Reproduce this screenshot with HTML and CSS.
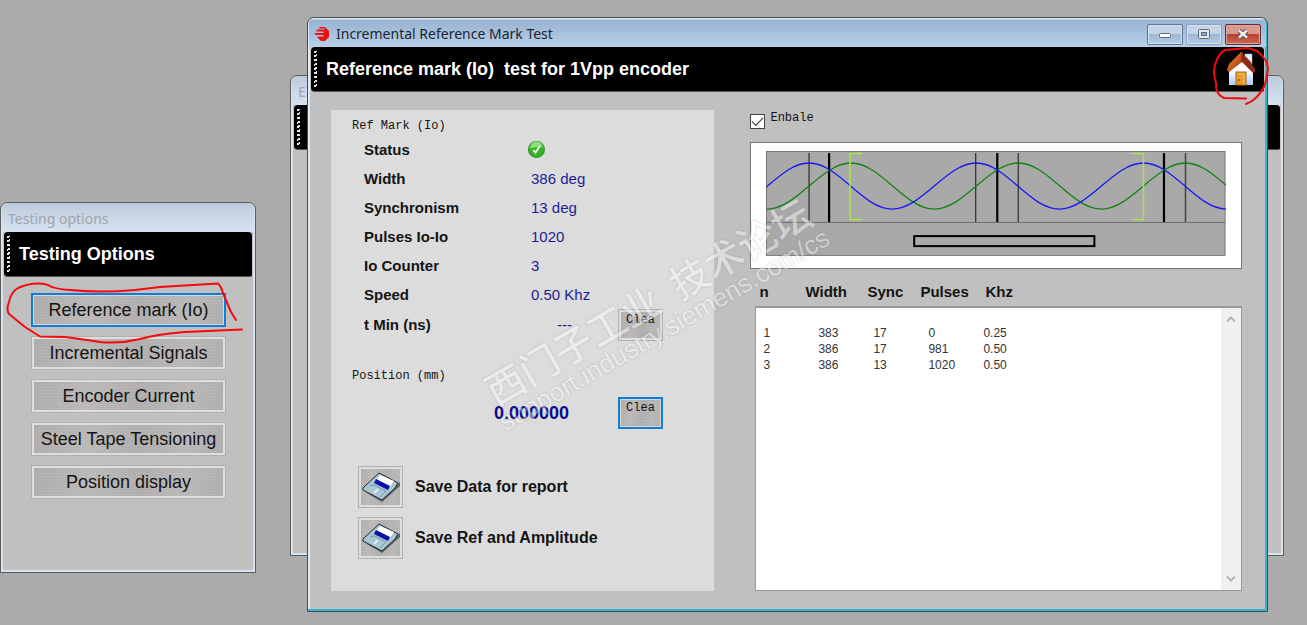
FILE: index.html
```html
<!DOCTYPE html>
<html lang="en">
<head>
<meta charset="utf-8">
<title>Incremental Reference Mark Test</title>
<link rel="stylesheet" href="styles.css">
</head>
<body>
<div class="desktop">

  <section class="window window-back">
    <div class="titlebar titlebar-idle">E</div>
    <div class="banner"><span class="grip"></span></div>
  </section>

  <section class="window window-options">
    <div class="titlebar titlebar-idle">Testing options</div>
    <div class="banner"><span class="grip"></span><h2 class="banner-title">Testing Options</h2></div>
    <nav class="options">
      <button class="metal option focused" type="button">Reference mark (Io)</button>
      <button class="metal option" type="button">Incremental Signals</button>
      <button class="metal option" type="button">Encoder Current</button>
      <button class="metal option" type="button">Steel Tape Tensioning</button>
      <button class="metal option" type="button">Position display</button>
    </nav>
  </section>

  <section class="window window-main">
    <div class="titlebar">
      <svg class="app-icon" viewBox="0 0 14 14"><path d="M5 0h5l4 4v6l-4 4H6l-3.500-3.500V9.500H8.500V8H0V6H8.500V4.500H1L2 2.500H10V1.500H3.500z" fill="#f20d12"/></svg>
      <span class="title-text">Incremental Reference Mark Test</span>
      <div class="controls">
        <button class="control" type="button" aria-label="Minimize"><svg viewBox="0 0 14 12"><rect x="1.500" y="5.500" width="11" height="4" rx="1" fill="#fff" stroke="#606a78"/></svg></button>
        <button class="control control-dim" type="button" aria-label="Maximize"><svg viewBox="0 0 14 12"><rect x="1.500" y="1.500" width="11" height="9" rx="1" fill="#e4e8ee" stroke="#606a78"/><rect x="4.500" y="4.500" width="5" height="3" fill="#8fa9c6" stroke="#606a78"/></svg></button>
        <button class="control control-close" type="button" aria-label="Close"><svg viewBox="0 0 14 12"><path d="M3 2.500l8 7M11 2.500l-8 7" stroke="#5a4a50" stroke-width="4.500"/><path d="M3 2.500l8 7M11 2.500l-8 7" stroke="#f4f0f0" stroke-width="2.500"/></svg></button>
      </div>
    </div>
    <div class="banner">
      <span class="grip"></span>
      <h1 class="banner-title">Reference mark (Io)&nbsp; test for 1Vpp encoder</h1>
      <button class="home" type="button" aria-label="Home">
        <svg viewBox="0 0 28 34">
          <defs>
            <linearGradient id="wall" x2="0" y2="1"><stop offset="0.400" stop-color="#fff"/><stop offset="1" stop-color="#a9cdfb"/></linearGradient>
            <linearGradient id="roof" x2="1" y2="1"><stop offset="0" stop-color="#ef8a35"/><stop offset="1" stop-color="#a32c0c"/></linearGradient>
          </defs>
          <path d="M18 2h7v10l-7-5z" fill="#e9f0fb" stroke="#a8b8d0" stroke-width=".5"/>
          <path d="M2 18L14 8l12 10v15H2z" fill="url(#wall)"/>
          <path d="M0 18L2 12 14 0l2 1-1 9-13 10z" fill="url(#roof)"/>
          <path d="M14 0l9 9 5 8v3l-2 1L14 9z" fill="#8f2c17"/>
          <rect x="9" y="20" width="10" height="13" fill="#e79d2c" stroke="#a9671b"/>
          <path d="M11 22h6v11" fill="none" stroke="#f6c268"/><circle cx="12" cy="28" r="1" fill="#8a5517"/>
        </svg>
      </button>
    </div>

    <div class="content">
      <section class="panel">
        <h3 class="group-title">Ref Mark (Io)</h3>
        <dl class="readings">
          <div class="reading"><dt>Status</dt><dd class="status">
            <svg viewBox="0 0 16 16" role="img" aria-label="OK"><circle cx="8" cy="8" r="7.500" fill="#35b524" stroke="#3a8f32"/><path d="M2 7a6 6 0 0 1 12-1Q8 5 2 7z" fill="#8fe07b"/><path d="M5 8.500l2 2.500 4-6" fill="none" stroke="#fff" stroke-width="1.700"/></svg></dd></div>
          <div class="reading"><dt>Width</dt><dd>386 deg</dd></div>
          <div class="reading"><dt>Synchronism</dt><dd>13 deg</dd></div>
          <div class="reading"><dt>Pulses Io-Io</dt><dd>1020</dd></div>
          <div class="reading"><dt>Io Counter</dt><dd>3</dd></div>
          <div class="reading"><dt>Speed</dt><dd>0.50 Khz</dd></div>
          <div class="reading"><dt>t Min (ns)</dt><dd class="empty">---</dd><dd><button class="metal clear" type="button">Clea</button></dd></div>
        </dl>
        <h3 class="group-title group-position">Position (mm)</h3>
        <div class="position">
          <output class="position-value">0.000000</output>
          <button class="metal clear focused" type="button">Clea</button>
        </div>
        <div class="actions">
          <div class="action">
            <button class="metal save" type="button" aria-labelledby="save-data">
              <svg viewBox="0 0 38 30">
                <path d="M3 20L20 30 38 14v-4L20 26z" fill="#5b6263"/>
                <path d="M1 16L17 1l19 10-3 5-13 12L1 18z" fill="#a9c6d3" stroke="#1d2a30"/>
                <path d="M18 3l14 6-4 6-14-7z" fill="#fff"/><path d="M14 7l14 7-2 4-14-7z" fill="#0a10b0"/>
                <path d="M8 14l4-1 12 6-6 6" fill="none" stroke="#7597a5"/><path d="M16 17l-4 4" stroke="#e3f0f4" stroke-width="2"/>
              </svg></button>
            <span id="save-data">Save Data for report</span>
          </div>
          <div class="action">
            <button class="metal save" type="button" aria-labelledby="save-ref">
              <svg viewBox="0 0 38 30">
                <path d="M3 20L20 30 38 14v-4L20 26z" fill="#5b6263"/>
                <path d="M1 16L17 1l19 10-3 5-13 12L1 18z" fill="#a9c6d3" stroke="#1d2a30"/>
                <path d="M18 3l14 6-4 6-14-7z" fill="#fff"/><path d="M14 7l14 7-2 4-14-7z" fill="#0a10b0"/>
                <path d="M8 14l4-1 12 6-6 6" fill="none" stroke="#7597a5"/><path d="M16 17l-4 4" stroke="#e3f0f4" stroke-width="2"/>
              </svg></button>
            <span id="save-ref">Save Ref and Amplitude</span>
          </div>
        </div>
      </section>

      <section class="results">
        <label class="enable"><input class="enable-box" type="checkbox" checked><span class="enable-text">Enbale</span></label>
        <div class="chart">
          <svg viewBox="0 0 459 105">
            <rect x=".5" y=".5" width="458" height="104" fill="#a9a9a9" stroke="#777"/>
            <path d="M0 71.500h459" stroke="#6f6f6f"/>
            <path d="M43 2v69M252 2v69M419 2v69" stroke="#444" stroke-width="1.500"/>
            <path d="M209.500 2v69" stroke="#111"/>
            <path d="M63 2v69M231 2v69M397.500 2v69" stroke="#000" stroke-width="2.200"/>
            <path d="M-82 12C-52 12-29 58 1 58S55 12 85 12 138 58 168 58 222 12 252 12 305 58 335 58 389 12 419 12 472 58 502 58" fill="none" stroke="#148214" stroke-width="1.300"/>
            <path d="M-40 58C-10 58 13 12 43 12S96 58 126 58 180 12 210 12 263 58 293 58 347 12 377 12 430 58 460 58" fill="none" stroke="#1818f0" stroke-width="1.300"/>
            <path d="M96 2.500H84v66h12M365 2.500h12v66h-12" fill="none" stroke="#a6e34e" stroke-width="1.500"/>
            <rect x="148" y="85" width="180" height="10" fill="none" stroke="#000" stroke-width="2"/>
          </svg>
        </div>
        <div class="log">
          <table class="log-table">
            <thead><tr><th>n</th><th>Width</th><th>Sync</th><th>Pulses</th><th>Khz</th></tr></thead>
            <tbody>
              <tr><td>1</td><td>383</td><td>17</td><td>0</td><td>0.25</td></tr>
              <tr><td>2</td><td>386</td><td>17</td><td>981</td><td>0.50</td></tr>
              <tr><td>3</td><td>386</td><td>13</td><td>1020</td><td>0.50</td></tr>
            </tbody>
          </table>
          <div class="scrollbar">
            <svg viewBox="0 0 10 8"><path d="M1 6.500l4-4 4 4" fill="none" stroke="#b4b4b4" stroke-width="2"/></svg>
            <svg viewBox="0 0 10 8"><path d="M1 1.500l4 4 4-4" fill="none" stroke="#b4b4b4" stroke-width="2"/></svg>
          </div>
        </div>
      </section>
    </div>

    <svg class="mark mark-home" viewBox="0 0 60 62"><path d="M36 53.500L14 53Q5 49 6 38Q2 26 6 17Q9 8 15 5L38 3L47 6Q54 12 57 18L58 24Q57 34 54 42Q47 55 36 59" /></svg>
  </section>

  <svg class="mark mark-option" viewBox="0 0 250 68"><path d="M242 51.500L185 54Q158 56 140 61Q120 66 100 64Q80 61 65 59L40 58.500L25 49L9 36Q6 32 9 24Q11 14 18 10Q34 3 48 7Q54 11 70 12Q100 15 135 12L160 9L218 5.500Q221 8 223 15L231 34L236 42"/></svg>

  <div class="watermark">
    <div class="watermark-name" lang="zh">西门子工业&nbsp; 技术论坛</div>
    <div class="watermark-url">support.industry.siemens.com/cs</div>
  </div>
</div>
</body>
</html>
```
FILE: styles.css
```css
* { box-sizing: border-box; }

body {
  margin: 0;
  font-family: "Liberation Sans", Arial, sans-serif;
  color: #141414;
}

h1, h2, h3, dl, dd { margin: 0; }

button { font-family: inherit; color: inherit; cursor: pointer; }

.desktop {
  position: relative;
  height: 100vh;
  min-height: 625px;
  overflow: hidden;
  background: #ababab;
}

/* Windows */
.window {
  position: absolute;
  display: flex;
  flex-direction: column;
  padding: 0 3px 3px;
  border: 1px solid #5c5c5c;
  border-radius: 7px 7px 0 0;
  background: #c0c0c0;
  box-shadow: inset 0 0 0 2px #d9e4f1;
}

.window-back { left: 290px; right: 23px; top: 75px; height: 481px; }
.window-options { left: 0; top: 202px; width: 256px; height: 371px; }
.window-main {
  left: 307px;
  right: 39px;
  top: 17px;
  bottom: 13px;
  border-color: #444c52;
  box-shadow: inset -2px -2px 0 #36b4cc, inset 2px 2px 0 #dcebf8;
}

.titlebar {
  display: flex;
  align-items: center;
  height: 29px;
  margin: 0 -2px;
  padding: 3px 5px 0 6px;
  border-radius: 6px 6px 0 0;
  background: linear-gradient(#dcebf8 0 1px, #98b3d1 2px, #b6cfe9);
  font-family: "Noto Sans", "Noto Sans CJK SC", sans-serif;
  font-size: 14px;
  line-height: 20px;
}

.titlebar-idle {
  background: linear-gradient(#bccbdc, #d6e3f1);
  color: #a2a5a9;
}

.app-icon { width: 14px; height: 14px; margin-right: 7px; }
.title-text { flex: 1; color: #1d2530; }
.controls { display: flex; gap: 3px; }

.control {
  display: grid;
  place-items: center;
  width: 36px;
  height: 21px;
  padding: 0;
  border: 1px solid #5c7390;
  border-radius: 2px;
  background: linear-gradient(#c3d4e7 45%, #9db8d6 50%, #b5cbe3);
  box-shadow: inset 0 0 0 1px #d5e2f0;
}
.control svg { width: 14px; height: 12px; }
.control-dim { border-color: #8aa1bd; }
.control-close {
  border-color: #642a2c;
  background: linear-gradient(#d99a8e 45%, #b9422e 50%, #c96954);
  box-shadow: inset 0 0 0 1px #dfa79c;
}

.banner {
  display: flex;
  align-items: center;
  height: 45px;
  padding: 0 9px 0 3px;
  border-radius: 4px 4px 2px 4px;
  border-bottom: 1px solid #555;
  background: #000;
}
.banner-title {
  flex: 1;
  margin-left: 9px;
  color: #fff;
  font-size: 18px;
  line-height: 24px;
  white-space: nowrap;
}
.grip {
  width: 3px;
  height: 36px;
  background: repeating-linear-gradient(160deg, #e8e8e8 0 2px, #000 2px 4px);
}
.home { padding: 0; border: 0; background: none; }
.home svg { display: block; width: 28px; height: 34px; }

/* Brushed metal buttons */
.metal {
  border: 1px solid #b0b0b0;
  background:
    repeating-linear-gradient(0deg, rgba(255, 255, 255, 0.06) 0 1px, transparent 1px 3px),
    linear-gradient(100deg, #aeabab, #bbb8b8 30%, #afadad 55%, #bab7b7 80%, #aeacac);
  box-shadow: inset 0 0 0 2px #dedede;
}
.metal.focused { border: 2px solid #0f7edb; box-shadow: inset 0 0 0 1px #d8d8d8; }

.options {
  display: flex;
  flex-direction: column;
  gap: 9px;
  padding: 16px 26px 0 27px;
}
.option {
  height: 34px;
  padding: 0;
  font-size: 18px;
  line-height: 24px;
  white-space: nowrap;
}

/* Main content */
.content {
  display: grid;
  flex: 1;
  grid-template-columns: 383fr 491fr;
  gap: 36px;
  padding: 18px 22px 17px 20px;
}

.panel {
  padding: 8px 20px 0 21px;
  background: #dcdcdc;
}

.group-title, .clear, .enable-text {
  font-family: "Liberation Mono", monospace;
  font-size: 12px;
  font-weight: 400;
  line-height: 16px;
}

.readings { padding: 1px 0 0 12px; }
.reading {
  display: grid;
  grid-template-columns: 167px 87px 1fr;
  align-items: center;
  height: 29px;
  font-size: 15px;
  line-height: 20px;
  white-space: nowrap;
}
.reading dt { font-weight: 700; }
.reading dd { color: #1c1c96; }
.reading .status { margin-left: -3px; }
.reading .empty { margin-left: 26px; }
.status svg { display: block; width: 17px; height: 17px; }

.clear {
  display: block;
  width: 45px;
  height: 32px;
  padding: 0 0 11px;
  color: #141414;
}

.group-position { margin-top: 30px; }
.position {
  display: grid;
  grid-template-columns: 266px 1fr;
  align-items: center;
  margin-top: 13px;
}
.position-value {
  padding-left: 142px;
  color: #0b0b8e;
  font-size: 18px;
  font-weight: 700;
}

.actions {
  display: grid;
  gap: 9px;
  margin-top: 37px;
  padding-left: 6px;
}
.action {
  display: flex;
  align-items: center;
  gap: 12px;
  font-size: 16px;
  font-weight: 700;
  line-height: 20px;
}
.save {
  display: grid;
  place-items: center;
  width: 45px;
  height: 42px;
  padding: 0;
}
.save svg { width: 38px; height: 30px; }

/* Results */
.results { display: flex; flex-direction: column; }

.enable { display: flex; gap: 5px; height: 32px; }
.enable-box {
  appearance: none;
  width: 15px;
  height: 15px;
  margin: 4px 0 0;
  border: 1px solid #444;
  background: #fff;
}
.enable-box:checked::before {
  content: "";
  display: block;
  width: 10px;
  height: 5px;
  margin: 2px 1px;
  border-left: 1px solid #333;
  border-bottom: 1px solid #333;
  transform: rotate(-45deg);
}

.chart {
  padding: 8px 15px 12px;
  border: 1px solid #777;
  background: #fff;
}
.chart svg { display: block; width: 100%; }

.log {
  position: relative;
  display: flex;
  flex: 1;
  margin: 13px 0 0 5px;
}
.log-table { display: flex; flex: 1; flex-direction: column; }
.log-table thead, .log-table tbody { display: block; }
.log-table tr { display: grid; justify-items: start; }
.log-table th, .log-table td { padding: 0; }
.log-table thead tr {
  grid-template-columns: 46px 62px 53px 65px 1fr;
  padding: 0 0 4px 4px;
  font-size: 15px;
  line-height: 20px;
}
.log-table tbody {
  flex: 1;
  padding-top: 17px;
  border: 2px solid #999;
  border-width: 2px 1px 1px;
  background: #fff;
}
.log-table tbody tr {
  grid-template-columns: 55px 55px 55px 55px 1fr;
  padding-left: 7px;
  color: #333;
  font-size: 12px;
  line-height: 16px;
}
.scrollbar {
  position: absolute;
  top: 26px;
  right: 1px;
  bottom: 1px;
  display: flex;
  flex-direction: column;
  align-items: center;
  justify-content: space-between;
  width: 20px;
  padding: 7px 0;
  background: #f0f0f0;
}
.scrollbar svg { width: 10px; height: 8px; }

/* Red pen marks */
.mark { position: absolute; pointer-events: none; }
.mark path {
  fill: none;
  stroke: #f5090c;
  stroke-width: 2;
  stroke-linecap: round;
  stroke-linejoin: round;
}
.mark-home { top: 27px; right: -3px; width: 60px; height: 62px; }
.mark-option { left: 0; top: 278px; width: 250px; height: 68px; }

.watermark {
  position: absolute;
  left: 50%;
  top: 50%;
  transform: translate(-50%, -51%) rotate(-30deg);
  opacity: 0.45;
  color: #fff;
  text-align: center;
  text-shadow: 0 0 2px #777;
  white-space: nowrap;
  pointer-events: none;
}
.watermark-name {
  font-family: "Noto Sans CJK SC", sans-serif;
  font-size: 39px;
  font-weight: 500;
  line-height: 40px;
}
.watermark-url { font-size: 26px; line-height: 28px; }
```
